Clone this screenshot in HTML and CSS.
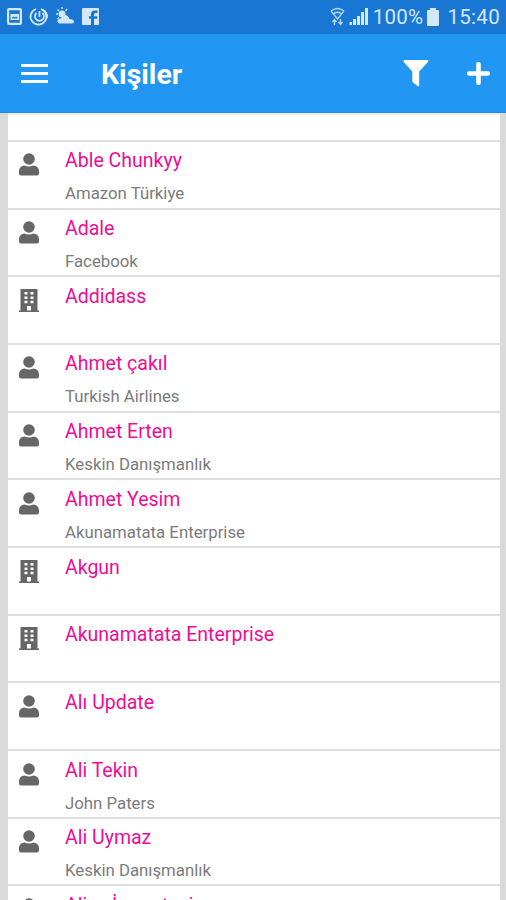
FILE: index.html
```
<!DOCTYPE html>
<html lang="tr">
<head>
<meta charset="utf-8">
<title>Kişiler</title>
<link rel="stylesheet" href="styles.css">
</head>
<body>
<svg class="defs" aria-hidden="true">
  <symbol id="person" viewBox="0 0 20 23">
    <circle cx="10" cy="6" r="5.8"/>
    <path d="M0 20.5V18.5C0 14.8 2.4 12.6 5.6 12.4C8.3 13.8 11.7 13.8 14.4 12.4C17.6 12.6 20 14.8 20 18.5V20.5Q20 22.6 18 22.6H2Q0 22.6 0 20.5Z"/>
  </symbol>
  <symbol id="building" viewBox="0 0 20 23">
    <path fill-rule="evenodd" d="M1.5 0H18.5V21.5H20V23H0V21.5H1.500ZM5.500 3V5.500H8.500V3ZM11.500 3V5.500H14.500V3ZM5.500 7.400V9.900H8.500V7.400ZM11.500 7.400V9.900H14.500V7.400ZM5.500 11.800V14.300H8.500V11.800ZM11.500 11.800V14.300H14.500V11.800ZM8 17V21.500H12V17Z"/>
  </symbol>
</svg>
<div class="status">
  <div class="notifications">
    <svg width="96" height="20" viewBox="0 0 96 20">
      <path fill-rule="evenodd" d="M2 1H13Q15 1 15 3V16Q15 18 13 18H2Q0 18 0 16V3Q0 1 2 1ZM2.200 3.200V15.800H12.800V3.200ZM3.500 13V7H12V13ZM5 11.500H10.500V10.500L9 9.500L8 10.500L6.500 9.500L5 10.500Z"/>
      <g fill="none" stroke="#d3e8fc" stroke-width="1.8"><path d="M29 2A8 8 0 1 0 34 2"/><path d="M35 2.600A8 8 0 0 1 40 11"/><path d="M29.500 6A4.500 4.500 0 1 0 35.500 6M32.500 4V10"/></g>
      <circle cx="55" cy="7" r="3.500"/><path d="M55 0V2M49 7H51M50.500 2.500L52 4M60 2L58.500 4M50.500 12L52 10.500" stroke="#d3e8fc" stroke-width="1.300"/>
      <path d="M53 16.500Q50 16 50.500 13.500Q51 11.500 54 11.500Q56 6.500 60 8.500Q62 9.500 62.500 12Q66.500 12 67 14.500Q67 16.500 65 16.500Z"/>
      <path fill-rule="evenodd" d="M76 1H91Q92 1 92 2V17Q92 18 91 18H76Q75 18 75 17V2Q75 1 76 1ZM84 18H87V11.800H90L90.400 9.300H87V7.500Q87 6 88.500 6H90.500V3.600H88Q84 3.600 84 7.300V9.300H82V11.800H84Z"/>
    </svg>
  </div>
  <div class="system">
    <svg width="40" height="20" viewBox="0 0 40 20">
      <g fill="none" stroke="#b5d8f8" stroke-width="1.4"><path d="M1 4Q7.500 -1 14 4M3 7Q7.500 3.500 12 7M1 4L7.500 12L14 4M4.500 18V13M2.500 15L4.500 12.500L6.500 15M10.500 12V17M8.500 15L10.500 17.500L12.500 15"/></g>
      <path d="M19.500 15H22V18H19.500ZM23 12H26V18H23ZM27 9H30V18H27ZM31 5H34V18H31ZM35 1H38V18H35Z"/>
    </svg>
    <span class="percent">100%</span>
    <svg class="battery" width="12" height="18" viewBox="0 0 12 18"><path d="M3 0H9V2H11Q12 2 12 3V17Q12 18 11 18H1Q0 18 0 17V3Q0 2 1 2H3Z"/></svg>
    <span class="clock">15:40</span>
  </div>
</div>
<header class="toolbar">
  <svg class="menu" width="27" height="20" viewBox="0 0 27 20"><path d="M0 0H27V3H0ZM0 8H27V11H0ZM0 16H27V19H0Z"/></svg>
  <h1>Kişiler</h1>
  <svg class="filter" width="26" height="27" viewBox="0 0 26 27"><path d="M1 0H25Q26 1 25 2L16.200 11.500V25.500Q16 26.700 15 26.300L10 22.500Q9.300 22 9.300 21V11.500L.7 2Q0 1 1 0Z"/></svg>
  <svg class="add" width="23" height="23" viewBox="0 0 23 23"><path d="M11.500 2.200V20.800M2.200 11.500H20.800" fill="none" stroke="#fff" stroke-width="4.600" stroke-linecap="round"/></svg>
</header>
<main class="list">
  <div class="spacer"></div>
  <div class="row"><svg class="icon"><use href="#person"/></svg><div><div class="name">Able Chunkyy</div><div class="company">Amazon Türkiye</div></div></div>
  <div class="row"><svg class="icon"><use href="#person"/></svg><div><div class="name">Adale</div><div class="company">Facebook</div></div></div>
  <div class="row"><svg class="icon"><use href="#building"/></svg><div><div class="name">Addidass</div></div></div>
  <div class="row"><svg class="icon"><use href="#person"/></svg><div><div class="name">Ahmet çakıl</div><div class="company">Turkish Airlines</div></div></div>
  <div class="row"><svg class="icon"><use href="#person"/></svg><div><div class="name">Ahmet Erten</div><div class="company">Keskin Danışmanlık</div></div></div>
  <div class="row"><svg class="icon"><use href="#person"/></svg><div><div class="name">Ahmet Yesim</div><div class="company">Akunamatata Enterprise</div></div></div>
  <div class="row"><svg class="icon"><use href="#building"/></svg><div><div class="name">Akgun</div></div></div>
  <div class="row"><svg class="icon"><use href="#building"/></svg><div><div class="name">Akunamatata Enterprise</div></div></div>
  <div class="row"><svg class="icon"><use href="#person"/></svg><div><div class="name">Alı Update</div></div></div>
  <div class="row"><svg class="icon"><use href="#person"/></svg><div><div class="name">Ali Tekin</div><div class="company">John Paters</div></div></div>
  <div class="row"><svg class="icon"><use href="#person"/></svg><div><div class="name">Ali Uymaz</div><div class="company">Keskin Danışmanlık</div></div></div>
  <div class="row"><svg class="icon"><use href="#person"/></svg><div><div class="name">Alize İmmatesi</div></div></div>
</main>
</body>
</html>
```
FILE: styles.css
```
* { box-sizing: border-box; }
html { height: 900px; overflow: hidden; }
body {
  margin: 0;
  height: 900px;
  overflow: hidden;
  display: flex;
  flex-direction: column;
  background: #dadada;
  font-family: Roboto, "Liberation Sans", sans-serif;
}
svg { display: block; flex: none; }
.defs { position: absolute; width: 0; height: 0; }
.status {
  flex: none;
  height: 34px;
  padding: 0 6px 0 7px;
  display: flex;
  justify-content: space-between;
  align-items: center;
  background: #1976d2;
  color: #d3e8fc;
  fill: #d3e8fc;
}
.system { display: flex; align-items: center; font-size: 20.5px; line-height: 34px; }
.percent { margin-left: 3px; letter-spacing: 0.3px; }
.battery { margin: 0 8px 0 4px; }
.clock { letter-spacing: 0.3px; }
.toolbar {
  flex: none;
  height: 79px;
  padding: 0 16px 0 21px;
  display: flex;
  align-items: center;
  background: #2196f3;
  border-bottom: 1px solid #168be8;
  color: #fff;
  fill: #fff;
}
.menu { margin-top: 2px; }
h1 { margin: 3px auto 0 53px; font-size: 28.5px; line-height: 36px; font-weight: 700; }
.filter { margin-right: 38px; }
.list { flex: 1; min-height: 0; overflow: hidden; margin: 0 6px 0 8px; background: #fff; }
.spacer { height: 26.9px; border-top: 2px solid #ececec; }
.row {
  height: 67.7px;
  padding: 7.5px 0 0 11px;
  border-top: 2px solid #dfdfdf;
  display: flex;
  align-items: flex-start;
}
.icon { width: 20px; height: 23px; margin: 4px 26px 0 0; fill: #666; }
.name { color: #ee0c97; font-size: 19.5px; line-height: 24px; }
.company { margin-top: 10px; color: #7b7b7b; font-size: 16.8px; line-height: 20px; }
```
